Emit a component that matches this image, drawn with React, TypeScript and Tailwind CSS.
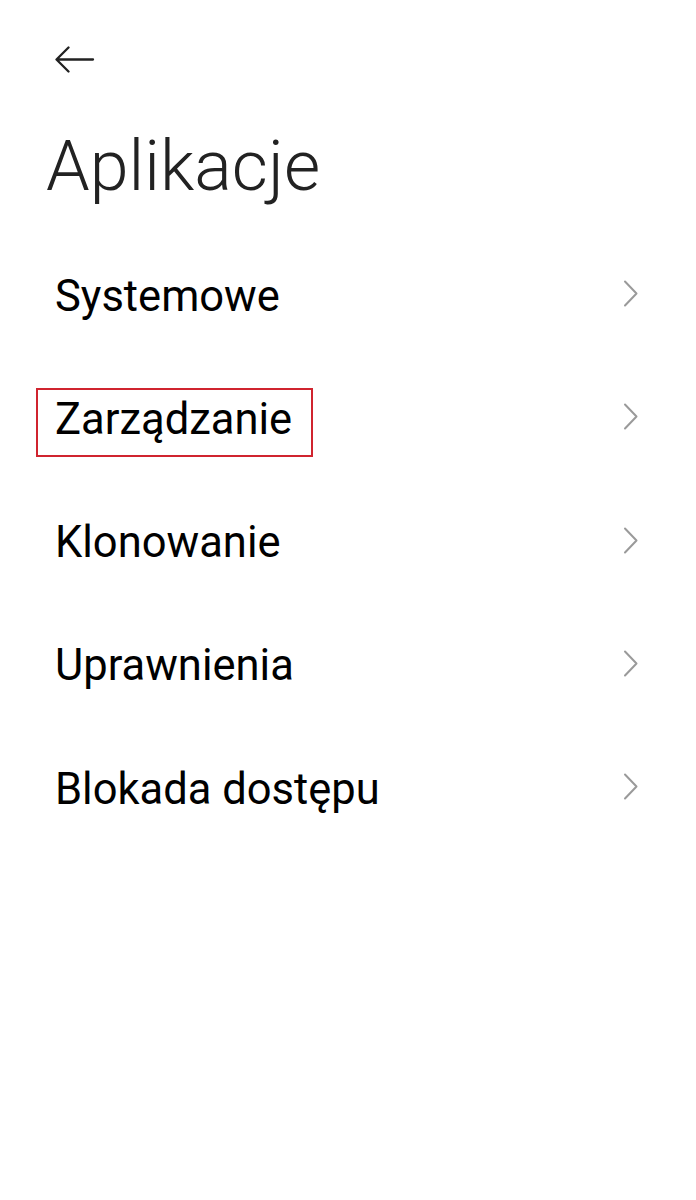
const items = ['Systemowe', 'Zarządzanie', 'Klonowanie', 'Uprawnienia', 'Blokada dostępu'];

function BackArrow() {
  return (
    <svg width="44" height="40" viewBox="0 0 44 40" fill="none">
      <path d="M2 19.5 H38 M13.5 7.5 L1.5 19.5 L13.5 31.5" stroke="#222" strokeWidth="2.3" strokeLinecap="round" strokeLinejoin="round" />
    </svg>
  );
}

function Chevron() {
  return (
    <svg width="16" height="27" viewBox="0 0 16 27" fill="none" className="mt-[-6px]">
      <path d="M2 1.5 L13.5 13.5 L2 25.5" stroke="#9a9a9a" strokeWidth="2" strokeLinecap="round" strokeLinejoin="round" />
    </svg>
  );
}

export default function App() {
  return (
    <div className="min-h-[1200px] w-[696px] bg-white font-['Roboto',sans-serif]">
      <div className="pl-[55px] pt-[40px]">
        <BackArrow />
      </div>

      <h1 className="ml-[46px] mt-[50px] text-[70px] font-light leading-[72px] text-[#222]">
        Aplikacje
      </h1>

      <ul className="mt-[33px] pl-[55px] pr-[57px]">
        {items.map((label, i) => (
          <li key={label} className="flex h-[123.25px] items-center justify-between">
            <span className="relative text-[43.5px] leading-[44px] text-black">
              {label}
              {i === 1 && (
                <span className="absolute -bottom-[15px] -left-[19px] -right-[21px] -top-[10px] border-2 border-[#d0242f]" />
              )}
            </span>
            <Chevron />
          </li>
        ))}
      </ul>
    </div>
  );
}
